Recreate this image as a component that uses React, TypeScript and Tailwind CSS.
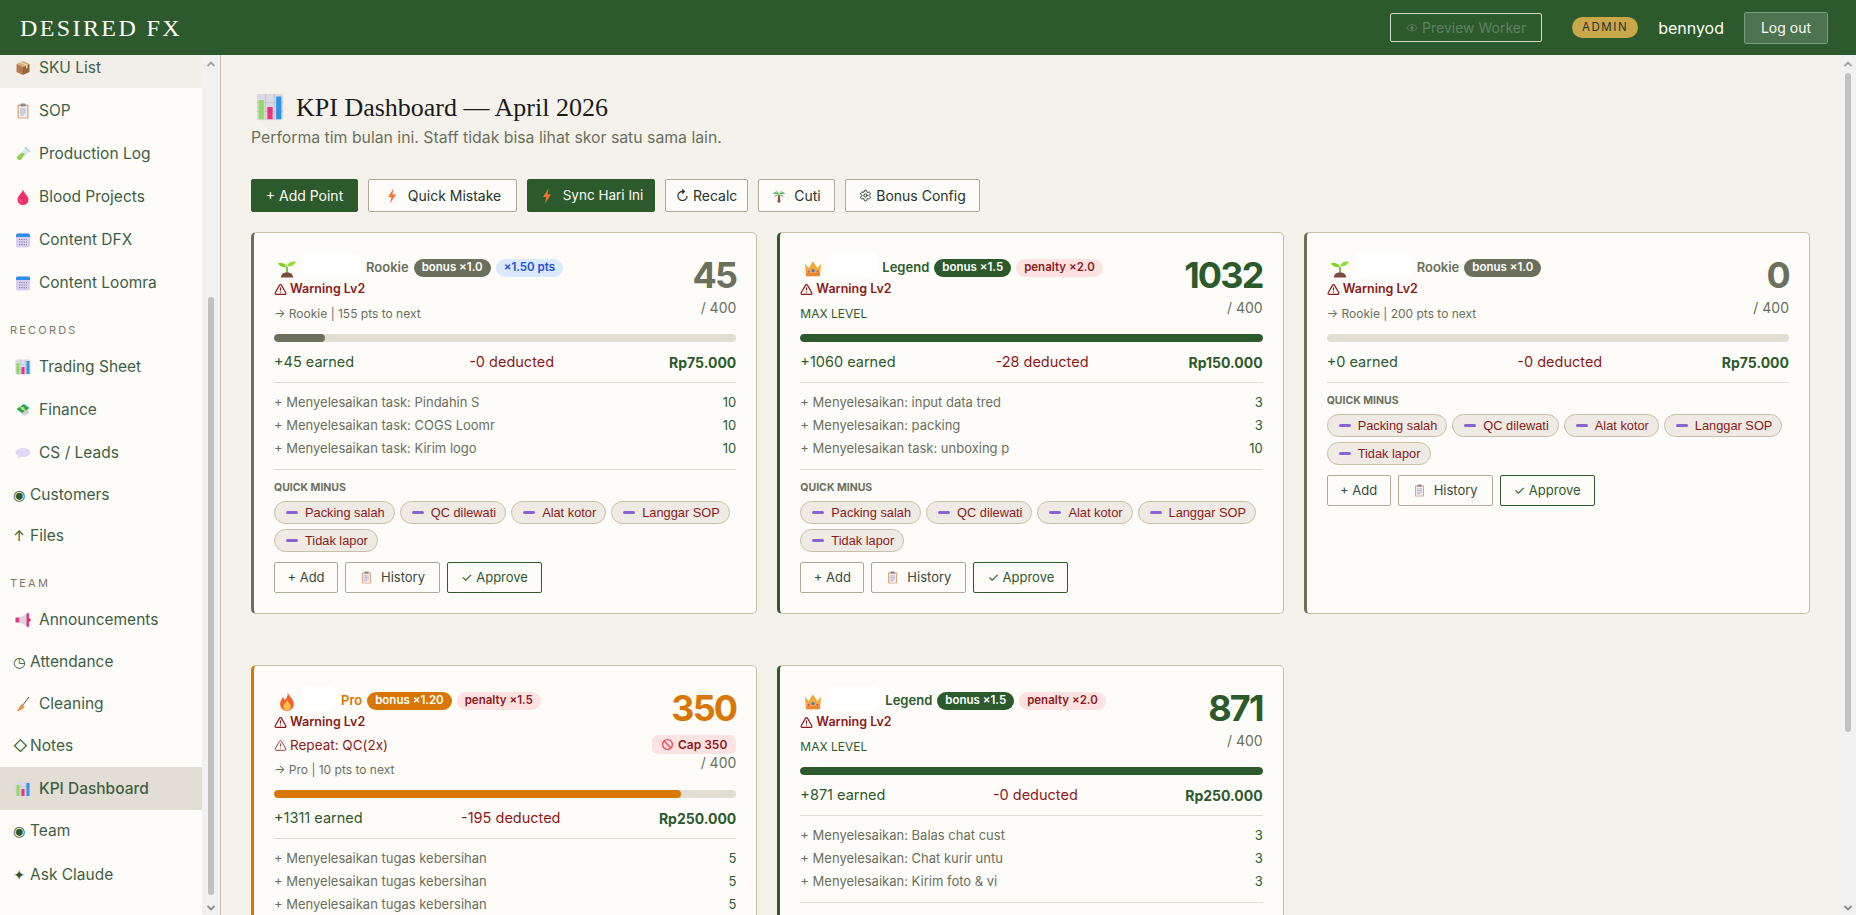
import clsx from "clsx";
import { Settings, TriangleAlert } from "lucide-react";

const sans = "font-['Inter','DejaVu_Sans',sans-serif]";

// emoji are not installed in the sandbox, so the small ones are drawn by hand
function Emoji({ name, className }: { name: string; className?: string }) {
  return (
    <svg viewBox="0 0 16 16" className={clsx("shrink-0", className)}>
      {name === "package" && (
        <>
          <path d="M8 1 14.500 4 8 7 1.500 4Z" fill="#d9a878" />
          <path d="M1.500 4 8 7v8L1.500 12Z" fill="#b07d52" />
          <path d="M14.500 4 8 7v8l6.500-3Z" fill="#94643e" />
          <path d="M4.500 2.600 11 5.700v3l1.500-.7V5L6 2Z" fill="#efd6b4" />
        </>
      )}
      {name === "clipboard" && (
        <>
          <rect x="2.500" y="1.500" width="11" height="14" rx="1" fill="#e0a577" />
          <rect x="3.800" y="3" width="8.400" height="11.500" fill="#f2eef6" />
          <rect x="5.500" y="0.500" width="5" height="3" rx="0.800" fill="#8d8a98" />
          <path d="M5 6h6M5 8h6M5 10h6M5 12h4" stroke="#a9a2bb" strokeWidth="0.900" />
        </>
      )}
      {name === "tube" && (
        <>
          <path d="M11 1.500 14.500 5 6 13.500a2.500 2.500 0 0 1-3.500-3.500Z" fill="#d6ecf2" />
          <path d="M7.500 6.500 10 8l-4 5.500a2.500 2.500 0 0 1-3.500-3.500Z" fill="#8fd14f" />
          <path d="M10 1 15 6" stroke="#a4cfe6" strokeWidth="1.500" />
        </>
      )}
      {name === "drop" && (
        <>
          <path d="M8 1C9.500 4.500 13.500 7.500 13.500 10.500a5.500 5.500 0 0 1-11 0C2.500 7.500 6.500 4.500 8 1Z" fill="#ef2f6b" />
          <path d="M5 10c.3 1.500 1 2.500 2.300 3" stroke="#f98fb0" strokeWidth="0.900" fill="none" />
        </>
      )}
      {name === "calendar" && (
        <>
          <rect x="1" y="1.500" width="14" height="14" rx="2" fill="#d9cff0" />
          <path d="M1 5V3.500a2 2 0 0 1 2-2h10a2 2 0 0 1 2 2V5Z" fill="#2f8cf0" />
          <path d="M4 7.500h8M4 10h8M4 12.700h8" stroke="#8d84ad" strokeWidth="1.200" strokeDasharray="1.300 1.050" />
        </>
      )}
      {name === "chart" && (
        <>
          <rect x="0.500" y="0.500" width="15" height="15" rx="1.500" fill="#dcd9e2" />
          <path d="M0.500 5.500h15M0.500 10.500h15M5.500 0.500v15M10.500 0.500v15" stroke="#c2bfcc" strokeWidth="0.500" />
          <rect x="1.500" y="4" width="3" height="11" fill="#8fdc62" />
          <rect x="6.500" y="8" width="3" height="7" fill="#e8347a" />
          <rect x="11.500" y="2" width="3" height="13" fill="#2f95ea" />
        </>
      )}
      {name === "money" && (
        <>
          <path d="M3 8 9 14l5-3-1-5Z" fill="#cfd4cf" />
          <path d="M1.500 7 9 2l5.500 4-7.500 5Z" fill="#1faa59" />
          <circle cx="8" cy="6.500" r="1.500" fill="#a8e6b8" />
          <path d="M5 4.500 10.500 9" stroke="#f2d35a" strokeWidth="1.300" />
        </>
      )}
      {name === "speech" && (
        <>
          <ellipse cx="8" cy="7.500" rx="7.500" ry="4.500" fill="#e0d9f5" />
          <path d="M3.500 10.500 2.500 14l4-2.500Z" fill="#e0d9f5" />
        </>
      )}
      {name === "megaphone" && (
        <>
          <rect x="0.500" y="5.500" width="4" height="5" fill="#e8347a" />
          <path d="M4.500 5.500 12 2v12l-7.500-3.500Z" fill="#d9d5de" />
          <rect x="11.500" y="1" width="2.500" height="14" rx="1" fill="#e8347a" />
          <rect x="14" y="6.500" width="1.500" height="3" fill="#b3245e" />
        </>
      )}
      {name === "broom" && (
        <>
          <path d="M14 1 7.500 9.500" stroke="#7a4a44" strokeWidth="1" />
          <path d="M6.500 8 9.500 10.500C8 13.500 5 14.800 1.500 15 3.500 13 5 10.500 6.500 8Z" fill="#f08a4b" />
        </>
      )}
      {name === "seedling" && (
        <>
          <path d="M8 13V7" stroke="#6cb33e" strokeWidth="1.400" />
          <path d="M8 7C7 4.500 4 3.500 1 4c.5 2.500 3.500 4 7 3Z" fill="#7ed321" />
          <path d="M8 6.500C9 3.500 12 2.500 15 3c-.5 2.500-3.500 4-7 3.500Z" fill="#8fdc3a" />
          <path d="M3 15.500c.3-3 2.500-4 5-4s4.700 1 5 4Z" fill="#7b4a3f" />
        </>
      )}
      {name === "crown" && (
        <>
          <path d="M1.500 4.500 4.500 8 8 2.500 11.500 8l3-3.500-1 10h-11Z" fill="#f4a93c" />
          <rect x="2.500" y="12" width="11" height="2.500" fill="#e8873a" />
          <circle cx="8" cy="10" r="1.300" fill="#3d7be0" />
          <circle cx="4.500" cy="11" r="0.800" fill="#e8347a" />
          <circle cx="11.500" cy="11" r="0.800" fill="#e8347a" />
        </>
      )}
      {name === "fire" && (
        <>
          <path d="M8.500 0.500C9 4 13.500 6 13.500 10.500a5.500 5.500 0 0 1-11 0C2.500 8 4 6.500 4.500 5c1 .5 1.500 1.500 1.500 2.500C7.500 6 9 3.500 8.500 0.500Z" fill="#f2622e" />
          <path d="M8 7c.3 2 3 3 3 5.500a3 3 0 0 1-6 0C5 10.500 7.500 9.500 8 7Z" fill="#fbbf4a" />
        </>
      )}
      {name === "bolt" && <path d="M9.500 0.500 4 9h3.300L6 15.500 12 6.500H8.500Z" fill="#f4743b" />}
      {name === "palm" && (
        <>
          <path d="M7 7h2l.8 8.500H6.200Z" fill="#8d5a4a" />
          <path d="M8 7C6 3 3 3 1 5.500 4 5 6 5.500 8 7ZM8 7C10 3 13 3 15 5.500 12 5 10 5.500 8 7Z" fill="#3f9e4a" />
          <path d="M8 7C7.500 4 6 2 3.500 1.500 5.500 3 7 5 8 7ZM8 7C8.500 4 10 2 12.500 1.500 10.500 3 9 5 8 7Z" fill="#57b85c" />
          <path d="M8 7C6 6 3.500 6.500 2.500 9 4.500 7.500 6 7 8 7ZM8 7C10 6 12.500 6.500 13.500 9 11.500 7.500 10 7 8 7Z" fill="#3f9e4a" />
        </>
      )}
      {name === "noentry" && (
        <>
          <circle cx="8" cy="8" r="6" fill="none" stroke="#ef4b5f" strokeWidth="1.700" />
          <path d="M3.800 3.800 12.200 12.200" stroke="#ef4b5f" strokeWidth="1.700" />
        </>
      )}
      {name === "eye" && (
        <>
          <path d="M1 8c2-3.500 4.500-4.500 7-4.500S13 4.500 15 8c-2 3-4.500 4-7 4s-5-1-7-4Z" fill="none" stroke="#5f8360" strokeWidth="1.100" />
          <circle cx="8" cy="8" r="2.300" fill="#5f8360" />
        </>
      )}
    </svg>
  );
}

type NavEntry =
  | { label: string; emoji: string; active?: boolean; hover?: boolean }
  | { label: string; glyph: string; rowClass?: string }
  | { section: string };

const NAV: NavEntry[] = [
  { label: "SKU List", emoji: "package", hover: true },
  { label: "SOP", emoji: "clipboard" },
  { label: "Production Log", emoji: "tube" },
  { label: "Blood Projects", emoji: "drop" },
  { label: "Content DFX", emoji: "calendar" },
  { label: "Content Loomra", emoji: "calendar" },
  { section: "Records" },
  { label: "Trading Sheet", emoji: "chart" },
  { label: "Finance", emoji: "money" },
  { label: "CS / Leads", emoji: "speech" },
  { label: "Customers", glyph: "◉" },
  { label: "Files", glyph: "↑" },
  { section: "Team" },
  { label: "Announcements", emoji: "megaphone" },
  { label: "Attendance", glyph: "◷" },
  { label: "Cleaning", emoji: "broom" },
  { label: "Notes", glyph: "◇", rowClass: "h-[42px] pb-[1px]" },
  { label: "KPI Dashboard", emoji: "chart", active: true },
  { label: "Team", glyph: "◉" },
  { label: "Ask Claude", glyph: "✦", rowClass: "h-[44px] pt-[3px]" },
];

function Scrollbar({ width, thumb }: { width: string; thumb: string }) {
  return (
    <div className={clsx("flex shrink-0 flex-col items-center bg-[#f1f1f1]", width)}>
      <svg viewBox="0 0 8 6" className="mt-[6px] w-[8px] text-[#a3a3a3]">
        <path d="M0.500 5 4 1.500 7.500 5" fill="none" stroke="currentColor" strokeWidth="1.800" />
      </svg>
      <div className="w-[6px] flex-1">
        <div className={clsx("w-[6px] rounded-[3px] bg-[#c1c1c1]", thumb)} />
      </div>
      <svg viewBox="0 0 8 6" className="mb-[4px] w-[8px] text-[#8a8a8a]">
        <path d="M0.500 1 4 4.500 7.500 1" fill="none" stroke="currentColor" strokeWidth="1.800" />
      </svg>
    </div>
  );
}

function Sidebar() {
  return (
    <aside className="flex w-[221px] shrink-0 border-r border-[#c8bfa8] bg-[#fdfcf8]">
      <nav className="min-w-0 flex-1 overflow-hidden">
        <div className="-mt-[10px]">
          {NAV.map((item, i) => {
            if ("section" in item) {
              return (
                <div key={i} className="h-[42px] pl-[10px] pt-5 text-[11px] leading-[14px] tracking-[0.2em] text-[#7d7868] uppercase">
                  {item.section}
                </div>
              );
            }
            if ("emoji" in item) {
              return (
                <div
                  key={i}
                  className={clsx(
                    "flex h-[43px] items-center gap-2 pl-[15px] text-[15.500px] text-[#3f5f45]",
                    i < 6 && "pt-[2px]",
                    item.active && "bg-[#e2ded4] font-medium text-[#2d5a2d]",
                    item.hover && "bg-[#f2eee8]"
                  )}
                >
                  <Emoji name={item.emoji} className="size-4" />
                  {item.label}
                </div>
              );
            }
            return (
              <div
                key={i}
                className={clsx("flex items-center gap-[5px] pl-[13px] text-[15.500px] text-[#3f5f45]", item.rowClass ?? "h-[41px]")}
              >
                <span className="w-3 text-center text-[14px] text-[#2d5a2d]">{item.glyph}</span>
                {item.label}
              </div>
            );
          })}
        </div>
      </nav>
      <Scrollbar width="w-[18px]" thumb="mt-[230px] h-[598px]" />
    </aside>
  );
}

type Tier = "rookie" | "legend" | "pro";

const TIERS: Record<Tier, { edge: string; text: string; pill: string; fill: string; emoji: string }> = {
  rookie: { edge: "border-l-[#6b705c]", text: "text-[#6b705c]", pill: "bg-[#6b705c]", fill: "bg-[#6b705c]", emoji: "seedling" },
  legend: { edge: "border-l-[#2d5a2d]", text: "text-[#2d5a2d]", pill: "bg-[#2d5a2d]", fill: "bg-[#2d5a2d]", emoji: "crown" },
  pro: { edge: "border-l-[#d97706]", text: "text-[#d97706]", pill: "bg-[#d97706]", fill: "bg-[#d97706]", emoji: "fire" },
};

const TIER_NAME: Record<Tier, string> = { rookie: "Rookie", legend: "Legend", pro: "Pro" };

type Member = {
  tier: Tier;
  blob: string;
  bonus: string;
  extra?: string;
  penalty?: string;
  score: string;
  next: string;
  repeat?: string;
  capped?: boolean;
  progress: number;
  earned: string;
  deducted: string;
  pay: string;
  tasks: [string, number][];
};

const MEMBERS: Member[] = [
  {
    tier: "rookie",
    blob: "w-[59px]",
    bonus: "bonus ×1.0",
    extra: "×1.50 pts",
    score: "45",
    next: "→ Rookie | 155 pts to next",
    progress: 11,
    earned: "+45 earned",
    deducted: "-0 deducted",
    pay: "Rp75.000",
    tasks: [
      ["+ Menyelesaikan task: Pindahin S", 10],
      ["+ Menyelesaikan task: COGS Loomr", 10],
      ["+ Menyelesaikan task: Kirim logo", 10],
    ],
  },
  {
    tier: "legend",
    blob: "w-[49px]",
    bonus: "bonus ×1.5",
    penalty: "penalty ×2.0",
    score: "1032",
    next: "MAX LEVEL",
    progress: 100,
    earned: "+1060 earned",
    deducted: "-28 deducted",
    pay: "Rp150.000",
    tasks: [
      ["+ Menyelesaikan: input data tred", 3],
      ["+ Menyelesaikan: packing", 3],
      ["+ Menyelesaikan task: unboxing p", 10],
    ],
  },
  {
    tier: "rookie",
    blob: "w-[57px]",
    bonus: "bonus ×1.0",
    score: "0",
    next: "→ Rookie | 200 pts to next",
    progress: 0,
    earned: "+0 earned",
    deducted: "-0 deducted",
    pay: "Rp75.000",
    tasks: [],
  },
  {
    tier: "pro",
    blob: "w-[34px]",
    bonus: "bonus ×1.20",
    penalty: "penalty ×1.5",
    score: "350",
    next: "→ Pro | 10 pts to next",
    repeat: "Repeat: QC(2x)",
    capped: true,
    progress: 88,
    earned: "+1311 earned",
    deducted: "-195 deducted",
    pay: "Rp250.000",
    tasks: [
      ["+ Menyelesaikan tugas kebersihan", 5],
      ["+ Menyelesaikan tugas kebersihan", 5],
      ["+ Menyelesaikan tugas kebersihan", 5],
    ],
  },
  {
    tier: "legend",
    blob: "w-[52px]",
    bonus: "bonus ×1.5",
    penalty: "penalty ×2.0",
    score: "871",
    next: "MAX LEVEL",
    progress: 100,
    earned: "+871 earned",
    deducted: "-0 deducted",
    pay: "Rp250.000",
    tasks: [
      ["+ Menyelesaikan: Balas chat cust", 3],
      ["+ Menyelesaikan: Chat kurir untu", 3],
      ["+ Menyelesaikan: Kirim foto & vi", 3],
    ],
  },
];

const QUICK = ["Packing salah", "QC dilewati", "Alat kotor", "Langgar SOP", "Tidak lapor"];

function KpiCard({ m }: { m: Member }) {
  const t = TIERS[m.tier];
  return (
    <div className={clsx("rounded-[5px] border border-l-[3px] border-[#c8bfa8] bg-[#fdfcf8] px-5 pb-5 pt-5", t.edge)}>
      <div className="flex justify-between">
        <div className="min-w-0">
          <div className="flex h-[26px] items-center gap-[5px] pt-1">
            <Emoji name={t.emoji} className="ml-[3px] size-5" />
            <div className={clsx("-mt-[4px] h-6 self-start rounded-[6px] bg-white", m.blob)} />
            <span className={clsx("text-[13px] font-semibold", t.text)}>{TIER_NAME[m.tier]}</span>
            <span className={clsx("flex h-[18px] items-center rounded-full px-2 text-[11.500px] font-semibold text-white", t.pill)}>
              {m.bonus}
            </span>
            {m.extra && (
              <span className="flex h-[18px] items-center rounded-full bg-[#dbeafe] px-2 text-[11.500px] font-semibold text-[#1d4ed8]">
                {m.extra}
              </span>
            )}
            {m.penalty && (
              <span className="flex h-[18px] items-center rounded-full bg-[#fde2e2] px-2 text-[11.500px] font-semibold text-[#8b1a1a]">
                {m.penalty}
              </span>
            )}
          </div>
          <div className="flex h-5 items-center gap-[3px] pt-[1px] text-[12.500px] font-semibold text-[#8b1a1a]">
            <TriangleAlert className="size-[13px]" strokeWidth={2.2} />
            Warning Lv2
          </div>
          {m.repeat && (
            <div className="mt-1 flex h-[18px] items-center gap-[3px] text-[13.500px] text-[#8b1a1a]">
              <TriangleAlert className="size-[13px]" strokeWidth={1.5} />
              {m.repeat}
            </div>
          )}
          <div className={clsx("h-5 text-[12px] leading-5", m.repeat ? "mt-[6px]" : "mt-[5px]", m.tier === "legend" ? "text-[#2d5a2d]" : "text-[#6b705c]")}>
            {m.next}
          </div>
        </div>
        <div className="flex flex-col items-end">
          <div className={clsx("text-[36px] font-bold leading-[44px] tracking-[-0.05em]", t.text)}>{m.score}</div>
          {m.capped && (
            <div className="mt-[5px] flex h-[19px] items-center gap-1 rounded-[6px] bg-[#fde2e2] px-[9px] text-[12px] font-semibold text-[#8b1a1a]">
              <Emoji name="noentry" className="size-[13px]" />
              Cap 350
            </div>
          )}
          <div className={clsx("text-[14px] text-[#6b705c]", m.capped ? "leading-[18px]" : "leading-[22px]")}>/ 400</div>
        </div>
      </div>

      <div className="mt-[10px] h-2 overflow-hidden rounded-full bg-[#e2ded4]">
        <div className={clsx("h-full rounded-full", t.fill)} style={{ width: `${m.progress}%` }} />
      </div>

      <div className="mt-[10px] flex h-5 items-center justify-between text-[14.500px]">
        <span className="text-[#2d5a2d]">{m.earned}</span>
        <span className="text-[#8b1a1a]">{m.deducted}</span>
        <span className="text-[14px] font-bold text-[#2d5a2d]">{m.pay}</span>
      </div>

      {m.tasks.length > 0 && (
        <div className="mt-[10px] border-t border-[#e2ded4] pb-[9px] pt-2">
          {m.tasks.map(([label, pts], i) => (
            <div key={i} className="flex h-[23px] items-center justify-between text-[13px] text-[#6b705c]">
              <span>{label}</span>
              <span className="text-[#2d5a2d]">{pts}</span>
            </div>
          ))}
        </div>
      )}

      <div className={clsx("border-t border-[#e2ded4] pt-[10px]", m.tasks.length === 0 && "mt-[10px]")}>
        <div className="h-4 text-[10.500px] font-bold leading-4 text-[#6b705c]">QUICK MINUS</div>
        <div className="mt-[5px] flex flex-wrap gap-[5px]">
          {QUICK.map((q) => (
            <span
              key={q}
              className="flex h-[23px] items-center rounded-full border border-[#c8bfa8] bg-[#efebe4] pl-[11px] pr-[9px] font-['Liberation_Sans',sans-serif] text-[12.800px] text-[#8b1a1a]"
            >
              <span className="mr-[7px] h-[2.500px] w-3 rounded-full bg-[#8a63d2]" />
              {q}
            </span>
          ))}
        </div>
        <div className="mt-[10px] flex gap-[7px]">
          <CardButton w="w-[64px]">+ Add</CardButton>
          <CardButton w="w-[95px]">
            <Emoji name="clipboard" className="size-[13px]" />
            History
          </CardButton>
          <CardButton w="w-[95px]" approve>
            ✓ Approve
          </CardButton>
        </div>
      </div>
    </div>
  );
}

function CardButton({ children, approve, w }: { children: React.ReactNode; approve?: boolean; w: string }) {
  return (
    <button
      className={clsx(
        "flex h-[31px] items-center justify-center gap-2 rounded-[2px] border bg-[#fdfcf8] text-[13px]",
        w,
        approve ? "border-[#2d5a2d] text-[#2d5a2d]" : "border-[#b0a898] text-[#3a4a3a]"
      )}
    >
      {children}
    </button>
  );
}

function ToolButton({ children, dark, w }: { children: React.ReactNode; dark?: boolean; w: string }) {
  return (
    <button
      className={clsx(
        "flex h-[33px] items-center justify-center gap-2 rounded-[2px] border text-[14px]",
        w,
        dark ? "border-[#2d5a2d] bg-[#2d5a2d] text-[#fdfcf8]" : "border-[#b0a898] bg-[#fdfcf8] text-[#26332a]"
      )}
    >
      {children}
    </button>
  );
}

export default function App() {
  return (
    <div className={clsx("flex h-screen flex-col overflow-hidden bg-[#f5f2ec]", sans)}>
      <header className="flex h-[55px] shrink-0 items-center bg-[#2d5a2d] pl-5 pr-7">
        <div className="font-['Liberation_Serif',serif] text-[24px] tracking-[0.1em] text-[#fdfcf8]">DESIRED FX</div>
        <div className="ml-auto flex items-center">
          <button className="flex h-[29px] w-[152px] items-center justify-center gap-1 rounded-[2px] border border-[#d8d8c8] text-[14px] text-[#5f8360]">
            <Emoji name="eye" className="size-3" />
            Preview Worker
          </button>
          <span className="ml-[30px] flex h-[21px] w-[66px] items-center justify-center rounded-full bg-[#c8a84b] text-[11.500px] tracking-[0.14em] text-[#26332a]">
            ADMIN
          </span>
          <span className="ml-5 text-[16px] text-[#fdfcf8]">bennyod</span>
          <button className="ml-5 h-8 w-[84px] rounded-[2px] border border-[#7d9a7d] bg-[#4d7350] text-[14px] text-[#fdfcf8]">Log out</button>
        </div>
      </header>

      <div className="flex min-h-0 flex-1">
        <Sidebar />
        <main className="flex min-w-0 flex-1">
          <div className="min-w-0 flex-1 overflow-hidden px-[30px] pt-[34px]">
            <div className="flex h-9 items-center gap-3 pl-[5px]">
              <Emoji name="chart" className="size-7" />
              <h1 className="font-['Liberation_Serif',serif] text-[26px] font-normal text-[#1a1a1a]">KPI Dashboard — April 2026</h1>
            </div>
            <p className="mt-[2px] text-[15.800px] leading-[22px] text-[#6b705c]">Performa tim bulan ini. Staff tidak bisa lihat skor satu sama lain.</p>

            <div className="mb-5 mt-[30px] flex gap-[10px]">
              <ToolButton dark w="w-[107px]">+ Add Point</ToolButton>
              <ToolButton w="w-[149px]">
                <Emoji name="bolt" className="size-4" />
                Quick Mistake
              </ToolButton>
              <ToolButton dark w="w-[128px]">
                <Emoji name="bolt" className="size-4" />
                <span className="text-[13.500px]">Sync Hari Ini</span>
              </ToolButton>
              <ToolButton w="w-[83px]">↻ Recalc</ToolButton>
              <ToolButton w="w-[77px]">
                <Emoji name="palm" className="size-[14px]" />
                Cuti
              </ToolButton>
              <ToolButton w="w-[135px]">
                <span className="flex items-center gap-1">
                  <Settings className="size-[13px]" strokeWidth={1.8} />
                  Bonus Config
                </span>
              </ToolButton>
            </div>

            <div className="grid grid-cols-3 gap-x-5 gap-y-[51px]">
              {MEMBERS.map((m, i) => (
                <KpiCard key={i} m={m} />
              ))}
            </div>
          </div>
          <Scrollbar width="w-4" thumb="mt-[6px] h-[659px]" />
        </main>
      </div>
    </div>
  );
}
